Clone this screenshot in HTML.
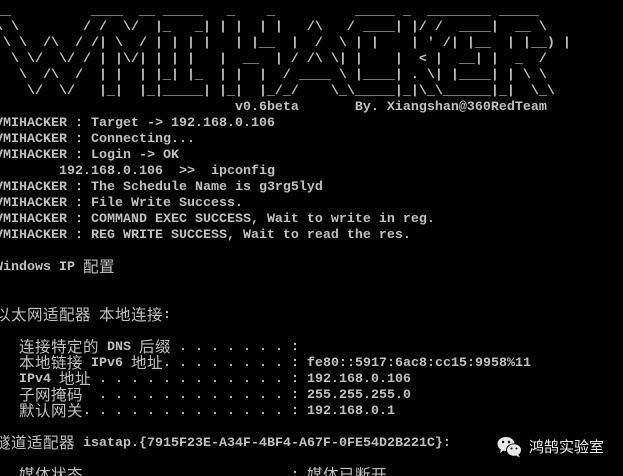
<!DOCTYPE html>
<html><head><meta charset="utf-8">
<style>
html,body{margin:0;padding:0;background:#000;width:623px;height:476px;overflow:hidden;position:relative}
pre{position:absolute;left:-5px;top:4px;margin:0;font-family:"Liberation Mono",monospace;font-size:13.33px;line-height:16px;font-weight:bold;color:#c0c0c0;white-space:pre}
.c{display:inline-block;height:16px;vertical-align:top;position:relative;top:-1px;font-family:"Noto Sans CJK SC","WenQuanYi Zen Hei",sans-serif;font-size:15.5px;letter-spacing:0.5px;font-weight:normal;line-height:14px;overflow:visible}
.logo{position:absolute;left:497px;top:436px;height:22px;display:flex;align-items:center}
.logo span{font-family:"Noto Sans CJK SC","WenQuanYi Zen Hei",sans-serif;font-size:15px;color:#f0f0f0;margin-left:6px;line-height:22px}
</style></head><body>
<pre>__          ____  __ _____   _    _          _____ _  ________ _____
\ \        / /  \/  |_   _| | |  | |   /\   / ____| |/ /  ____|  __ \
 \ \  /\  / /| \  / | | | |   | |__  |  /  \ | |    | ' /| |__  | |__) |
  \ \/  \/ / | |\/| | | |   |  __  | / /\ \| |    |  &lt; |  __| |  _  /
   \  /\  /  | |  | |_| |_  | |  |  / ____ \ |____| . \| |____| | \ \
    \/  \/   |_|  |_|_____| |_|  |_/_/    \_\_____|_|\_\______|_|  \_\
                              v0.6beta       By. Xiangshan@360RedTeam
VMIHACKER : Target -&gt; 192.168.0.106
VMIHACKER : Connecting...
VMIHACKER : Login -&gt; OK
        192.168.0.106  &gt;&gt;  ipconfig
VMIHACKER : The Schedule Name is g3rg5lyd
VMIHACKER : File Write Success.
VMIHACKER : COMMAND EXEC SUCCESS, Wait to write in reg.
VMIHACKER : REG WRITE SUCCESS, Wait to read the res.

Windows IP <span class="c">配置</span>


<span class="c">以太网适配器</span> <span class="c">本地连接</span>:

   <span class="c">连接特定的</span> DNS <span class="c">后缀</span> . . . . . . . :
   <span class="c">本地链接</span> IPv6 <span class="c">地址</span>. . . . . . . . : fe80::5917:6ac8:cc15:9958%11
   IPv4 <span class="c">地址</span> . . . . . . . . . . . . : 192.168.0.106
   <span class="c">子网掩码</span>  . . . . . . . . . . . . : 255.255.255.0
   <span class="c">默认网关</span>. . . . . . . . . . . . . : 192.168.0.1

<span class="c">隧道适配器</span> isatap.{7915F23E-A34F-4BF4-A67F-0FE54D2B221C}:

   <span class="c">媒体状态</span>  . . . . . . . . . . . . : <span class="c">媒体已断开</span></pre>
<div class="logo">
<svg width="26" height="22" viewBox="0 0 26 22">
<ellipse cx="9" cy="8" rx="8.5" ry="7" fill="#e8e8e8"/>
<path d="M4 13 L3 17 L7 14 Z" fill="#e8e8e8"/>
<circle cx="6" cy="6" r="1.2" fill="#000"/><circle cx="12" cy="6" r="1.2" fill="#000"/>
<ellipse cx="17" cy="14" rx="8" ry="6.5" fill="#000"/>
<ellipse cx="17" cy="14" rx="7" ry="5.8" fill="#e8e8e8"/>
<path d="M21 18 L23 21.5 L18 19 Z" fill="#e8e8e8"/>
<circle cx="14.5" cy="12.5" r="1" fill="#000"/><circle cx="19.5" cy="12.5" r="1" fill="#000"/>
</svg>
<span>鸿鹄实验室</span>
</div>
</body></html>
